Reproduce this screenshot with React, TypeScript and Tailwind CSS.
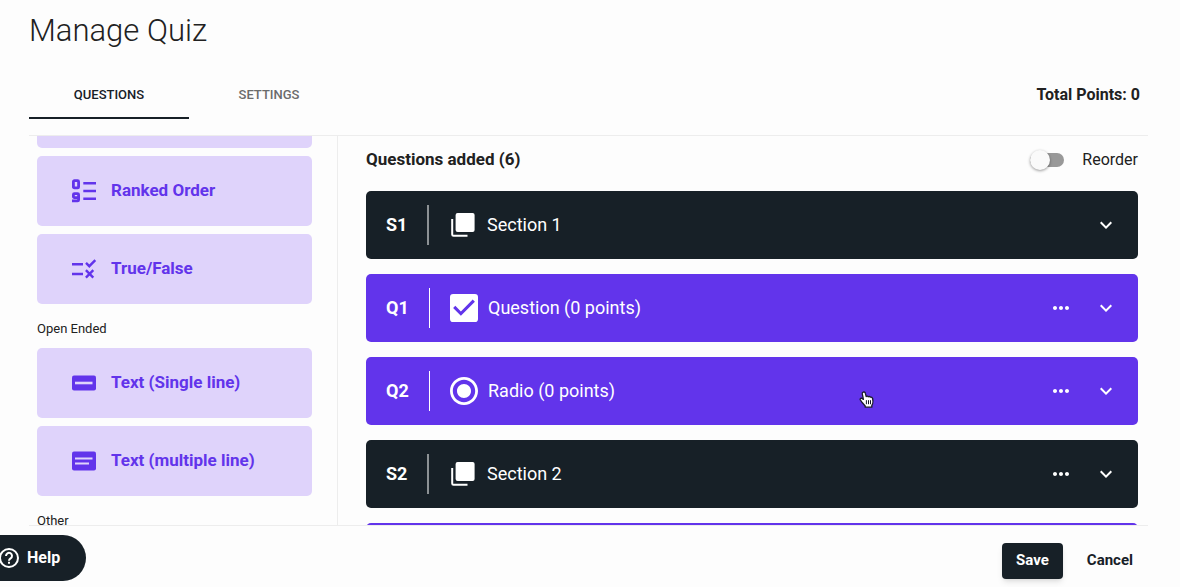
import React from 'react';
import { MdCheckBox, MdExpandMore, MdMoreHoriz, MdRadioButtonChecked } from 'react-icons/md';

type Kind = 'section' | 'checkbox' | 'radio';

interface QuizItem {
  code: string;
  kind: Kind;
  title: string;
  hasMenu: boolean;
}

const items: QuizItem[] = [
  { code: 'S1', kind: 'section', title: 'Section 1', hasMenu: false },
  { code: 'Q1', kind: 'checkbox', title: 'Question (0 points)', hasMenu: true },
  { code: 'Q2', kind: 'radio', title: 'Radio (0 points)', hasMenu: true },
  { code: 'S2', kind: 'section', title: 'Section 2', hasMenu: true },
];

const RankedIcon = () => (
  <svg width="26" height="26" viewBox="0 0 26 26" fill="none" stroke="currentColor" strokeWidth="2.8">
    <rect x="2.4" y="2.7" width="5.2" height="7.2" rx="1" />
    <path d="M7.6 19.6H3.4a1 1 0 0 1-1-1V16.7a1 1 0 0 1 1-1h3.2a1 1 0 0 1 1 1v5.2a1 1 0 0 1-1 1H1" />
    <path d="M12.3 5.3H25M12.3 13H25M12.3 20.7H25" strokeWidth="2.5" />
  </svg>
);

const TrueFalseIcon = () => (
  <svg width="26" height="26" viewBox="0 0 26 26" fill="none" stroke="currentColor" strokeWidth="2.4">
    <path d="M1 8.2H12M1 18H12" />
    <path d="M15 6.9l3.3 3.3 6-6M14.9 14.2l7.4 7.4M22.3 14.2l-7.4 7.4" />
  </svg>
);

const SingleLineIcon = () => (
  <svg width="26" height="26" viewBox="0 0 26 26">
    <rect x="1" y="5.5" width="24" height="15" rx="2" fill="currentColor" />
    <path d="M4 13H21.5" stroke="#dfd3fb" strokeWidth="2.6" />
  </svg>
);

const MultiLineIcon = () => (
  <svg width="26" height="26" viewBox="0 0 26 26">
    <rect x="1" y="3.5" width="24" height="19" rx="2" fill="currentColor" />
    <path d="M4 10.5H21.5M4 15.5H18" stroke="#dfd3fb" strokeWidth="2.2" />
  </svg>
);

const SectionIcon = () => (
  <svg width="24" height="24" viewBox="0 0 24 24">
    <rect x="4.6" y="0" width="19" height="19" rx="2" fill="white" />
    <path d="M1.2 6V21.5a1.3 1.3 0 0 0 1.3 1.3H16.5" fill="none" stroke="white" strokeWidth="2" />
  </svg>
);

const HelpIcon = () => (
  <svg width="22" height="22" viewBox="0 0 22 22" fill="none" stroke="white" strokeWidth="2">
    <circle cx="11" cy="11" r="9" />
    <path d="M8 8.9a3 3 0 1 1 4.6 2.5c-1 .7-1.6 1.1-1.6 2.3" />
    <path d="M11 14.8v2" />
  </svg>
);

const PointerHand = () => (
  <svg width="16" height="18" viewBox="0 0 16 18">
    <path
      d="M4.2 1.2c1-.5 1.9 0 2.1 1l.9 3.3c.7-.5 1.6-.4 2.1.3.8-.5 1.7-.2 2.1.4 1-.3 2 .2 2.2 1.3.4 1.8.7 3.5 0 5.3l-.8 1.8v1.6H6.2v-1.2L3.4 11.8 1.3 8.9c-.5-.9.2-1.9 1.3-1.7l1.8 1.2L3.3 2.8c-.2-.7.2-1.3.9-1.6z"
      fill="white"
      stroke="#1a1a2a"
      strokeWidth="1.3"
      strokeLinejoin="round"
    />
    <path d="M7.4 9.2v4M9.5 9.2v4M11.5 9.2v4" stroke="#1a1a2a" strokeWidth="1" />
  </svg>
);

const TypeButton = ({ icon, label }: { icon: React.ReactNode; label: string }) => (
  <button className="flex h-[70px] w-full shrink-0 items-center gap-3.5 rounded-[5px] bg-[#dfd3fb] pl-[34px] text-left text-[17px] font-bold text-[#6234eb]">
    {icon}
    {label}
  </button>
);

const GroupLabel = ({ children }: { children: React.ReactNode }) => (
  <h3 className="pt-2 pb-0.5 text-[13px] leading-[18px] text-[#212121]">{children}</h3>
);

const ItemRow = ({ item }: { item: QuizItem }) => {
  const isSection = item.kind === 'section';
  return (
    <li
      className={`flex h-[68px] shrink-0 items-center rounded-[5px] pr-5 pl-5 text-lg text-white ${
        isSection ? 'bg-[#172027]' : 'bg-[#6234eb]'
      }`}
    >
      <span
        className={`flex h-10 items-center font-bold ${
          isSection ? 'w-[43px] border-r-2 border-[#8c9194]' : 'w-11 border-r border-white'
        }`}
      >
        {item.code}
      </span>
      <span className={isSection ? 'mr-3 ml-[22px]' : 'mr-2.5 ml-5'}>
        {isSection && <SectionIcon />}
        {item.kind === 'checkbox' && <MdCheckBox size={28} viewBox="3 3 18 18" />}
        {item.kind === 'radio' && <MdRadioButtonChecked size={28} viewBox="2 2 20 20" />}
      </span>
      <span className="flex-1">{item.title}</span>
      {item.hasMenu && (
        <button aria-label="More" className="mr-[21px]">
          <MdMoreHoriz size={24} />
        </button>
      )}
      <button aria-label="Expand">
        <MdExpandMore size={24} />
      </button>
    </li>
  );
};

const App: React.FC = () => {
  return (
    <div className="relative flex h-screen flex-col overflow-hidden bg-[#fdfdfd] pr-8 pl-[29px] font-[Roboto,sans-serif] text-[#212121]">
      <header>
        <h1 className="pt-[11px] text-[31px] leading-10 font-light">Manage Quiz</h1>
        <div className="mt-5 flex items-center justify-between pr-2">
          <nav className="flex text-[13px] font-medium">
            <button className="h-12 w-40 border-b-2 border-[#172027] pt-0.5 text-[#172027]">QUESTIONS</button>
            <button className="h-12 w-40 border-b-2 border-transparent pt-0.5 text-[#6b6b6b]">SETTINGS</button>
          </nav>
          <p className="text-base font-bold">Total Points: 0</p>
        </div>
      </header>

      <main className="mt-4 flex min-h-0 flex-1 border-y border-[#ededed]">
        {/* Question types */}
        <aside className="flex w-[309px] shrink-0 flex-col gap-2 overflow-hidden border-r border-[#ededed] pr-[25px] pl-2">
          <div className="h-3 shrink-0 rounded-b-[5px] bg-[#dfd3fb]" />
          <TypeButton icon={<RankedIcon />} label="Ranked Order" />
          <TypeButton icon={<TrueFalseIcon />} label="True/False" />
          <GroupLabel>Open Ended</GroupLabel>
          <TypeButton icon={<SingleLineIcon />} label="Text (Single line)" />
          <TypeButton icon={<MultiLineIcon />} label="Text (multiple line)" />
          <GroupLabel>Other</GroupLabel>
        </aside>

        {/* Added questions */}
        <section className="flex flex-1 flex-col overflow-hidden pr-2.5 pl-7">
          <div className="mb-[7px] flex h-12 shrink-0 items-center justify-between">
            <h2 className="text-[17px] font-bold">Questions added (6)</h2>
            <label className="flex items-center gap-[18px] text-base">
              <input
                type="checkbox"
                role="switch"
                className="relative h-3.5 w-[34px] appearance-none rounded-full bg-[#999999] before:absolute before:-top-[3px] before:left-0 before:size-5 before:rounded-full before:bg-[#fafafa] before:shadow-[0_1px_3px_rgba(0,0,0,0.4)] before:content-['']"
              />
              Reorder
            </label>
          </div>
          <ul className="flex flex-col gap-[15px]">
            {items.map((item) => (
              <ItemRow key={item.code} item={item} />
            ))}
            <li className="h-[68px] shrink-0 rounded-[5px] bg-[#6234eb]" />
          </ul>
        </section>
      </main>

      <footer className="flex h-[61px] items-center justify-end gap-6 pt-2 pr-[15px] text-[15px] font-bold">
        <button className="h-9 rounded bg-[#172027] px-3.5 text-white shadow-md">Save</button>
        <button className="text-[#172027]">Cancel</button>
      </footer>

      {/* Floating help launcher */}
      <button className="absolute bottom-1.5 left-0 flex h-[46px] w-[86px] items-center gap-[7px] rounded-r-full bg-[#172027] text-base font-bold text-white">
        <span className="-ml-0.5">
          <HelpIcon />
        </span>
        Help
      </button>

      <div className="pointer-events-none absolute top-[391px] left-[859px]">
        <PointerHand />
      </div>
    </div>
  );
};

export default App;
